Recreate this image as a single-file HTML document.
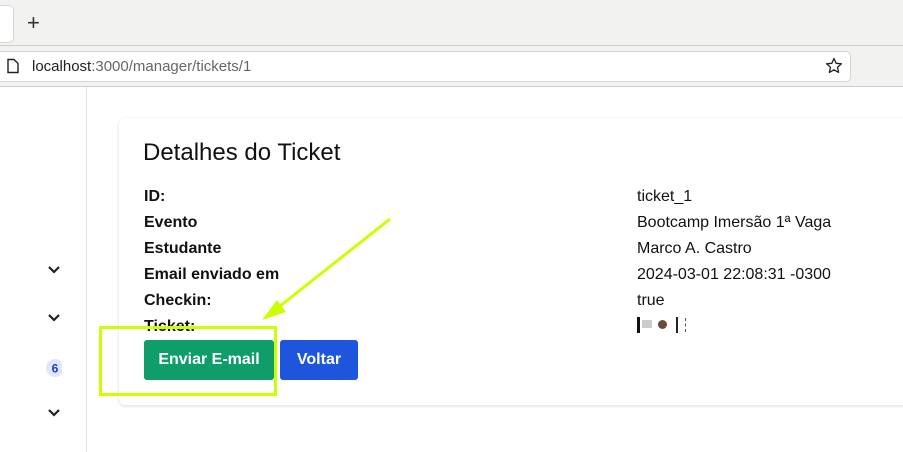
<!DOCTYPE html>
<html><head><style>
body{margin:0;width:903px;height:452px;overflow:hidden;font-family:"Liberation Sans",sans-serif;background:#fff;position:relative}
.abs{position:absolute}
.lbl{position:absolute;left:144px;font-weight:bold;font-size:16px;color:#111}
.val{position:absolute;left:637px;font-size:16px;color:#111}
</style></head><body>
<div class="abs" style="left:0;top:0;width:903px;height:45px;background:#f2f2f1;border-bottom:1px solid #cfcdca"></div>
<div class="abs" style="left:-10px;top:5px;width:22px;height:36px;background:#fff;border:1px solid #d8d6d3;border-radius:5px"></div>
<div class="abs" style="left:27px;top:10px;font-size:22px;color:#333">+</div>
<div class="abs" style="left:0;top:46px;width:903px;height:40px;background:#f2f2f1;border-bottom:1px solid #cfcdca"></div>
<div class="abs" style="left:-10px;top:51px;width:859px;height:29px;background:#fff;border:1px solid #d8d6d3;border-radius:5px"></div>
<svg class="abs" style="left:6px;top:58px" width="14" height="16"><path d="M2 1.5h6l4 4v9h-10z" fill="none" stroke="#222" stroke-width="1.4"/></svg>
<div class="abs" style="left:32px;top:58px;font-size:15px;color:#222">localhost<span style="color:#666">:3000/manager/tickets/1</span></div>
<svg class="abs" style="left:825px;top:57px" width="18" height="18"><path d="M9 1.5l2.2 4.8 5.2.5-3.9 3.5 1.1 5.1L9 12.8l-4.6 2.6 1.1-5.1L1.6 6.8l5.2-.5z" fill="none" stroke="#222" stroke-width="1.3" stroke-linejoin="round"/></svg>
<div class="abs" style="left:86px;top:87px;width:1px;height:365px;background:#e5e5e5"></div>
<svg class="abs" style="left:46px;top:264px" width="16" height="160"><g fill="none" stroke="#222" stroke-width="2.2"><path d="M3 3l5 5 5-5"/><path d="M3 51l5 5 5-5"/><path d="M3 146l5 5 5-5"/></g><circle cx="9" cy="104" r="9" fill="#dde8fb"/><text x="9" y="108.5" font-size="12" font-weight="bold" text-anchor="middle" fill="#1e40af" font-family="Liberation Sans">6</text></svg>
<div class="abs" style="left:119px;top:118px;width:800px;height:287px;background:#fff;border-radius:6px;box-shadow:0 1px 3px rgba(0,0,0,.15)"></div>
<div class="abs" style="left:143px;top:139px;font-size:24px;color:#111">Detalhes do Ticket</div>
<div class="lbl" style="top:188px">ID:</div>
<div class="lbl" style="top:214px">Evento</div>
<div class="lbl" style="top:240px">Estudante</div>
<div class="lbl" style="top:266px">Email enviado em</div>
<div class="lbl" style="top:292px">Checkin:</div>
<div class="lbl" style="top:318px">Ticket:</div>
<div class="val" style="top:188px">ticket_1</div>
<div class="val" style="top:214px">Bootcamp Imersão 1ª Vaga</div>
<div class="val" style="top:240px">Marco A. Castro</div>
<div class="val" style="top:266px">2024-03-01 22:08:31 -0300</div>
<div class="val" style="top:292px">true</div>
<div class="abs" style="left:637px;top:317px;width:50px;height:16px;background:#fff;border-left:3px solid #111"></div>
<div class="abs" style="left:642px;top:320px;width:10px;height:8px;background:#999;opacity:.5"></div>
<div class="abs" style="left:658px;top:320px;width:9px;height:9px;border-radius:50%;background:#6b4a3a"></div>
<div class="abs" style="left:676px;top:317px;width:2px;height:16px;background:#222"></div>
<div class="abs" style="left:685px;top:318px;width:1px;height:14px;border-left:1px dashed #555"></div>
<div class="abs" style="left:144px;top:340px;width:130px;height:40px;background:#0f9d6b;border-radius:3px;color:#fff;font-weight:bold;font-size:16px;line-height:40px;text-align:center">Enviar E-mail</div>
<div class="abs" style="left:280px;top:340px;width:78px;height:40px;background:#1d56dc;border-radius:3px;color:#fff;font-weight:bold;font-size:16px;line-height:40px;text-align:center">Voltar</div>
<div class="abs" style="left:99px;top:326px;width:172px;height:64px;border:3px solid #ccff00"></div>
<svg class="abs" style="left:0;top:0" width="903" height="452"><path d="M390 219L270 314" stroke="#ccff00" stroke-width="3"/><path d="M262 320L277 300L286 312Z" fill="#ccff00"/></svg>
</body></html>
